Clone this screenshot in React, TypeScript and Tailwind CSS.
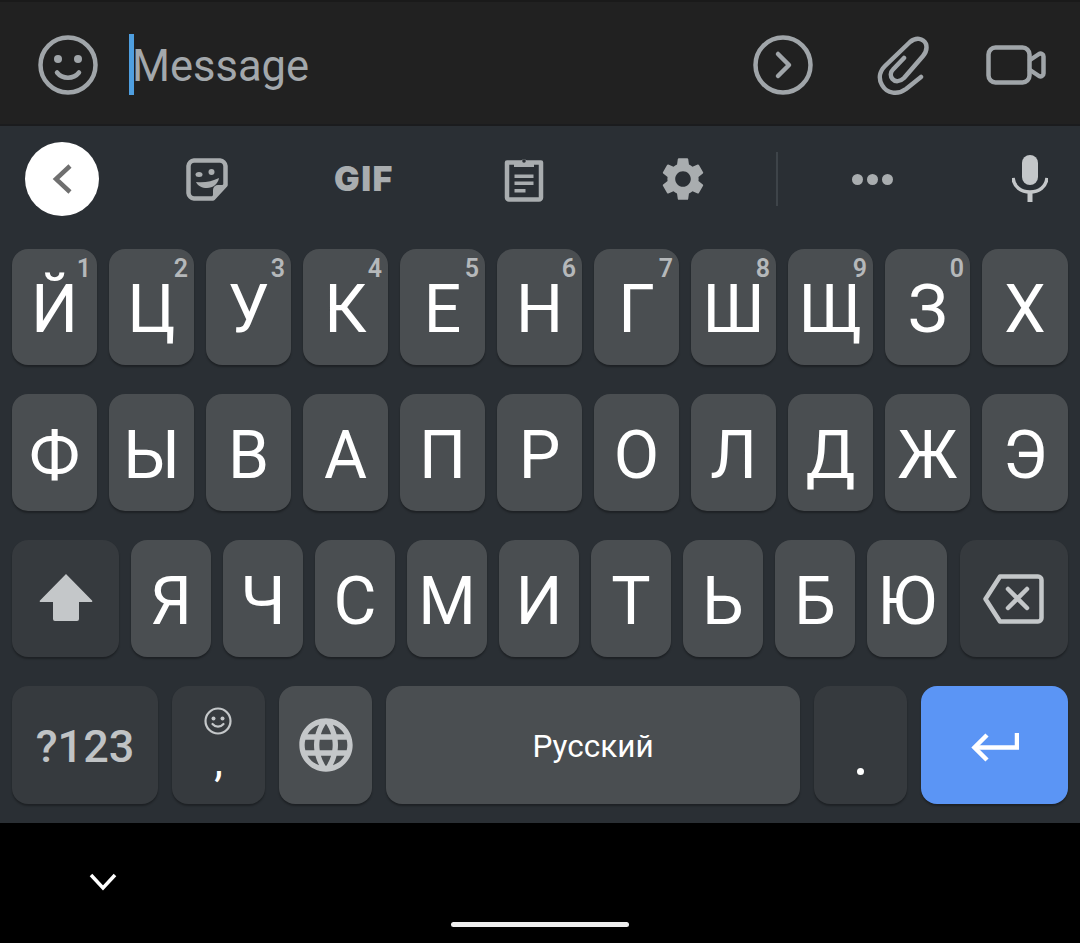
import { MdLanguage, MdSettings } from "react-icons/md";

const ROW1 = [
  ["Й", "1"],
  ["Ц", "2"],
  ["У", "3"],
  ["К", "4"],
  ["Е", "5"],
  ["Н", "6"],
  ["Г", "7"],
  ["Ш", "8"],
  ["Щ", "9"],
  ["З", "0"],
  ["Х", ""],
];
const ROW2 = ["Ф", "Ы", "В", "А", "П", "Р", "О", "Л", "Д", "Ж", "Э"];
const ROW3 = ["Я", "Ч", "С", "М", "И", "Т", "Ь", "Б", "Ю"];

function LetterKey({ label, hint, wide }: { label: string; hint?: string; wide?: boolean }) {
  return (
    <div
      className={`relative h-full pt-[6px] rounded-2xl bg-[#4a4e51] shadow-[0_2px_2px_rgba(0,0,0,0.3)] flex items-center justify-center text-white text-[66px] leading-none ${
        wide ? "w-[85px] last:flex-1" : "flex-1"
      }`}
    >
      {label}
      {hint && (
        <span className="absolute top-[5px] right-[6px] text-[25px] leading-[30px] font-semibold text-[#b5b8ba]">{hint}</span>
      )}
    </div>
  );
}

export default function App() {
  return (
    <div className="w-[1080px] h-[943px] bg-black flex flex-col overflow-hidden font-['Roboto',sans-serif]">
      {/* message bar */}
      <div className="h-[126px] shrink-0 pt-[4px] bg-[#212121] border-t-2 border-b-2 border-t-[#1a1a1a] border-b-[#1b1c1e] flex items-center pl-[37px] pr-[34px]">
        <svg width="62" height="62" viewBox="0 0 62 62" fill="none" stroke="#a0a5a9" strokeWidth="4.5">
          <circle cx="31" cy="31" r="27.5" />
          <circle cx="21" cy="25" r="4" fill="#a0a5a9" stroke="none" />
          <circle cx="41" cy="25" r="4" fill="#a0a5a9" stroke="none" />
          <path d="M20 38.5c5.5 7 16.5 7 22 0" strokeLinecap="round" />
        </svg>
        <div className="ml-[30px] -mt-[2px] w-[5px] h-[61px] bg-[#4f9fe0]" />
        <div className="-ml-[2px] mt-[3px] text-[43.500px] leading-none text-[#a3a8ac]">Message</div>
        <div className="ml-auto flex items-center">
          <svg width="62" height="62" viewBox="0 0 62 62" fill="none" stroke="#a0a5a9" strokeWidth="4.5" strokeLinecap="round" strokeLinejoin="round">
            <circle cx="31" cy="31" r="27.5" />
            <path d="M26 20l11 11-11 11" />
          </svg>
          <svg className="ml-[61px]" width="54" height="62" viewBox="0 0 54 62" fill="none" stroke="#a0a5a9" strokeWidth="4.5" strokeLinecap="round" strokeLinejoin="round">
            <path d="M46 43L31 55C23 61 12 60 7 51C3 44 5 37 10 32L35 8C41 3 48 4 51 10C52.500 15 50.500 19 48 22L29 44C25 48 20 48 17.500 45C15 42 15.500 38 18 35.500L29 24" />
          </svg>
          <svg className="ml-[57px]" width="60" height="40" viewBox="0 0 60 40" fill="none" stroke="#a0a5a9" strokeWidth="4.5" strokeLinecap="round" strokeLinejoin="round">
            <rect x="2.5" y="2.5" width="41" height="35" rx="7" />
            <path d="M44 15l9-6c2-1 4.500 0 4.500 2.500v17c0 2.500-2.500 3.500-4.500 2.500l-9-6" />
          </svg>
        </div>
      </div>

      {/* keyboard */}
      <div className="h-[697px] shrink-0 bg-[#2a2f34] flex flex-col">
        {/* toolbar */}
        <div className="h-[123px] shrink-0 pb-[17px] flex items-center">
          <div className="ml-[25px] w-[74px] h-[74px] rounded-full bg-white flex items-center justify-center">
            <svg width="24" height="32" viewBox="0 0 24 32" fill="none" stroke="#6f6f6f" strokeWidth="4.5">
              <path d="M20 3L6 16l14 13" />
            </svg>
          </div>
          <svg className="ml-[87px]" width="42" height="43" viewBox="0 0 42 43" fill="none">
            <path d="M8 2.500h26a6 6 0 0 1 5.500 5.500v19L27 40.500H8a6 6 0 0 1-5.500-5.500V8a6 6 0 0 1 5.500-5.500z" stroke="#a9adaf" strokeWidth="4.5" strokeLinejoin="round" />
            <path d="M40 27H32a5 5 0 0 0-5 5v9z" fill="#a9adaf" />
            <ellipse cx="13" cy="16.500" rx="3.500" ry="2.500" fill="#a9adaf" />
            <circle cx="25.500" cy="14" r="3" fill="#a9adaf" />
            <path d="M10 24c8 1 16-.5 23-4-1 6-6 10-12 10-5 0-9-2-11-6z" fill="#a9adaf" />
          </svg>
          <div className="ml-[106px] w-[58px] text-center text-[34px] leading-none font-black tracking-[1.500px] text-[#a9adaf] font-['Inter',sans-serif]">
            GIF
          </div>
          <svg className="ml-[112px]" width="40" height="48" viewBox="0 0 40 48" fill="none">
            <path d="M3 7.500h34v35a2 2 0 0 1-2 2H5a2 2 0 0 1-2-2z" stroke="#a9adaf" strokeWidth="4.5" strokeLinejoin="round" />
            <path d="M10 6h7a3.500 3.500 0 0 1 6 0h7v6H10z" fill="#a9adaf" />
            <circle cx="20" cy="6" r="1.800" fill="#2a2f34" />
            <path d="M10.500 19.500h19v3.500h-19zM10.500 26.500h19v3.500h-19zM10.500 34h11v3.500h-11z" fill="#a9adaf" />
          </svg>
          <MdSettings className="ml-[113px] text-[#a9adaf]" size={52} />
          <div className="ml-[67px] w-[2px] h-[54px] bg-[#3e4449]" />
          <div className="ml-[74px] flex gap-[4px]">
            <span className="w-[11px] h-[11px] rounded-full bg-[#a9adaf]" />
            <span className="w-[11px] h-[11px] rounded-full bg-[#a9adaf]" />
            <span className="w-[11px] h-[11px] rounded-full bg-[#a9adaf]" />
          </div>
          <svg className="ml-[119px]" width="36" height="48" viewBox="0 0 36 48" fill="none">
            <rect x="10" y="0" width="16" height="30" rx="8" fill="#c4c7c9" />
            <path d="M1 23c1 9 8 14 17 14s16-5 17-14" stroke="#c4c7c9" strokeWidth="3.500" />
            <rect x="15.500" y="36" width="5" height="11" fill="#c4c7c9" />
          </svg>
        </div>

        {/* keys */}
        <div className="px-3 flex flex-col gap-[29px]">
          <div className="h-[116px] flex gap-3">
            {ROW1.map(([l, h]) => (
              <LetterKey key={l} label={l} hint={h} wide />
            ))}
          </div>
          <div className="h-[117px] flex gap-3">
            {ROW2.map((l) => (
              <LetterKey key={l} label={l} wide />
            ))}
          </div>
          <div className="h-[117px] flex">
            <div className="w-[107px] h-full rounded-2xl bg-[#363a3e] shadow-[0_2px_2px_rgba(0,0,0,0.3)] flex items-center justify-center">
              <svg className="-mt-[2px]" width="54" height="50" viewBox="0 0 54 50" fill="#c4c7c9">
                <path d="M27 1L53 27.500c.8.8.300 1.500-1 1.500H40v17a2 2 0 0 1-2 2H16a2 2 0 0 1-2-2V29H2c-1.300 0-1.800-.7-1-1.500z" />
              </svg>
            </div>
            <div className="ml-3 w-[816px] h-full flex gap-3">
              {ROW3.map((l) => (
                <LetterKey key={l} label={l} />
              ))}
            </div>
            <div className="ml-[13px] flex-1 h-full rounded-2xl bg-[#363a3e] shadow-[0_2px_2px_rgba(0,0,0,0.3)] flex items-center justify-center">
              <svg width="62" height="50" viewBox="0 0 62 50" fill="none" stroke="#c4c7c9" strokeWidth="4.500" strokeLinejoin="round">
                <path d="M17 2.500h38a3.500 3.500 0 0 1 3.500 3.500v38a3.500 3.500 0 0 1-3.500 3.500H17L2.500 25z" />
                <path d="M25 15l19 19M44 15L25 34" strokeLinecap="round" />
              </svg>
            </div>
          </div>
          <div className="h-[118px] flex gap-[14px]">
            <div className="w-[146px] h-full pt-[3px] rounded-2xl bg-[#363a3e] shadow-[0_2px_2px_rgba(0,0,0,0.3)] flex items-center justify-center text-[45px] leading-none font-medium text-[#c0c3c5]">
              ?123
            </div>
            <div className="w-[93px] h-full rounded-2xl bg-[#363a3e] shadow-[0_2px_2px_rgba(0,0,0,0.3)] flex flex-col items-center text-white relative">
              <svg className="mt-[21px] -ml-[2px]" width="28" height="28" viewBox="0 0 28 28" fill="none" stroke="#c4c7c9" strokeWidth="2.200">
                <circle cx="14" cy="14" r="12.500" />
                <circle cx="9.500" cy="11.500" r="2" fill="#c4c7c9" stroke="none" />
                <circle cx="18.500" cy="11.500" r="2" fill="#c4c7c9" stroke="none" />
                <path d="M8.500 17c3 3.500 8 3.500 11 0" strokeLinecap="round" />
              </svg>
              <span className="absolute top-[53px] text-[44px] leading-none">,</span>
            </div>
            <div className="w-[93px] h-full rounded-2xl bg-[#4a4e51] shadow-[0_2px_2px_rgba(0,0,0,0.3)] flex items-center justify-center">
              <MdLanguage className="text-[#c4c7c9]" size={64} />
            </div>
            <div className="w-[414px] h-full pt-[3px] rounded-2xl bg-[#4a4e51] shadow-[0_2px_2px_rgba(0,0,0,0.3)] flex items-center justify-center text-white text-[31.500px] leading-none">
              Русский
            </div>
            <div className="w-[93px] h-full rounded-2xl bg-[#363a3e] shadow-[0_2px_2px_rgba(0,0,0,0.3)] flex items-end justify-center pb-[29px]">
              <span className="w-[7px] h-[7px] rounded-full bg-white" />
            </div>
            <div className="flex-1 h-full pt-[4px] rounded-2xl bg-[#5b95f5] shadow-[0_2px_2px_rgba(0,0,0,0.3)] flex items-center justify-center">
              <svg width="48" height="30" viewBox="0 0 48 30" fill="none" stroke="#fff" strokeWidth="4.500">
                <path d="M46 1v14.500H4" />
                <path d="M16 3L3.500 15.500 16 28" />
              </svg>
            </div>
          </div>
        </div>
      </div>

      {/* nav bar */}
      <div className="flex-1 relative">
        <svg className="absolute left-[89px] top-[50px]" width="28" height="18" viewBox="0 0 28 18" fill="none" stroke="#fff" strokeWidth="3.500">
          <path d="M2 2l12 13L26 2" />
        </svg>
        <div className="absolute left-[451px] top-[99px] w-[178px] h-[5px] rounded-full bg-[#eeeeee]" />
      </div>
    </div>
  );
}
